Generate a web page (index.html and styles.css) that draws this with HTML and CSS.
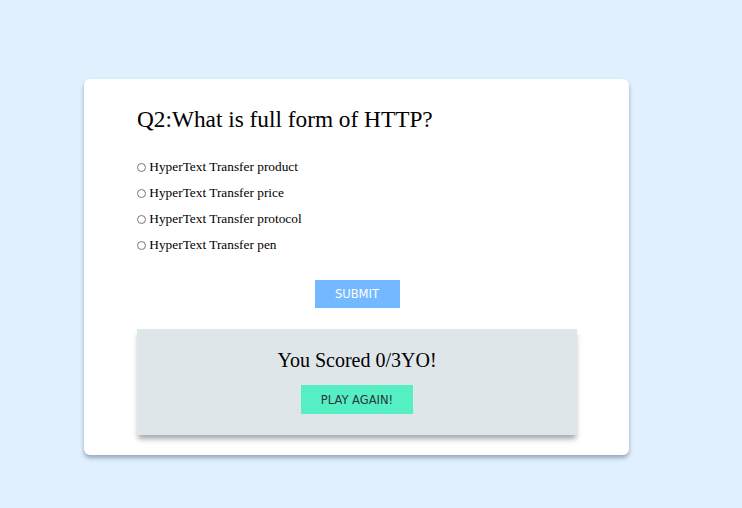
FILE: index.html
```html
<!DOCTYPE html>
<html>
<head>
<meta charset="utf-8">
<link rel="stylesheet" href="styles.css">
</head>
<body>
<div class="card">
  <h2 class="question">Q2:What is full form of HTTP?</h2>
  <ul class="options">
    <li><label><input type="radio" name="q"> HyperText Transfer product</label></li>
    <li><label><input type="radio" name="q"> HyperText Transfer price</label></li>
    <li><label><input type="radio" name="q"> HyperText Transfer protocol</label></li>
    <li><label><input type="radio" name="q"> HyperText Transfer pen</label></li>
  </ul>
  <div class="actions"><button class="submit">SUBMIT</button></div>
  <div class="score">
    <h3 class="score-text">You Scored 0/3YO!</h3>
    <button class="again">PLAY AGAIN!</button>
  </div>
</div>
</body>
</html>
```
FILE: styles.css
```css
html, body { margin: 0; padding: 0; }
body {
  background: #e0f0fe;
  font-family: "Liberation Serif", "Times New Roman", serif;
  width: 742px;
  height: 508px;
  padding-top: 79px;
  box-sizing: border-box;
}
.card {
  margin-left: 84px;
  width: 545px;
  height: 376px;
  box-sizing: border-box;
  background: #fff;
  border-radius: 6px;
  box-shadow: 0 3px 4px rgba(90, 110, 130, 0.55);
  padding: 26px 52px 0 53px;
}
.question {
  margin: 0;
  font-weight: normal;
  font-size: 23.3px;
  line-height: 28px;
}
.options {
  list-style: none;
  margin: 21px 0 0;
  padding: 0;
}
.options li {
  font-size: 13.33px;
  height: 26px;
  line-height: 26px;
}
.options input {
  margin: 0;
  width: 9px;
  height: 9px;
  vertical-align: -1px;
}
.actions {
  display: flex;
  justify-content: center;
  margin-top: 22px;
}
.submit {
  width: 85px;
  height: 28px;
  border: 0;
  background: #74b9ff;
  color: #fff;
  font-family: "DejaVu Sans", Tahoma, sans-serif;
  font-size: 11.5px;
  padding: 0;
}
.score {
  margin-top: 21px;
  height: 106px;
  background: #dfe6e9;
  box-shadow: 0 5px 5px -1px rgba(80, 90, 100, 0.5);
  display: flex;
  flex-direction: column;
  align-items: center;
  box-sizing: border-box;
  padding-top: 20px;
}
.score-text {
  margin: 0;
  font-weight: normal;
  font-size: 20px;
  line-height: 22px;
}
.again {
  margin-top: 14px;
  width: 112px;
  height: 29px;
  border: 0;
  background: #55efc4;
  color: #2d3436;
  font-family: "DejaVu Sans", Tahoma, sans-serif;
  font-size: 11.5px;
  padding: 0;
}
```
